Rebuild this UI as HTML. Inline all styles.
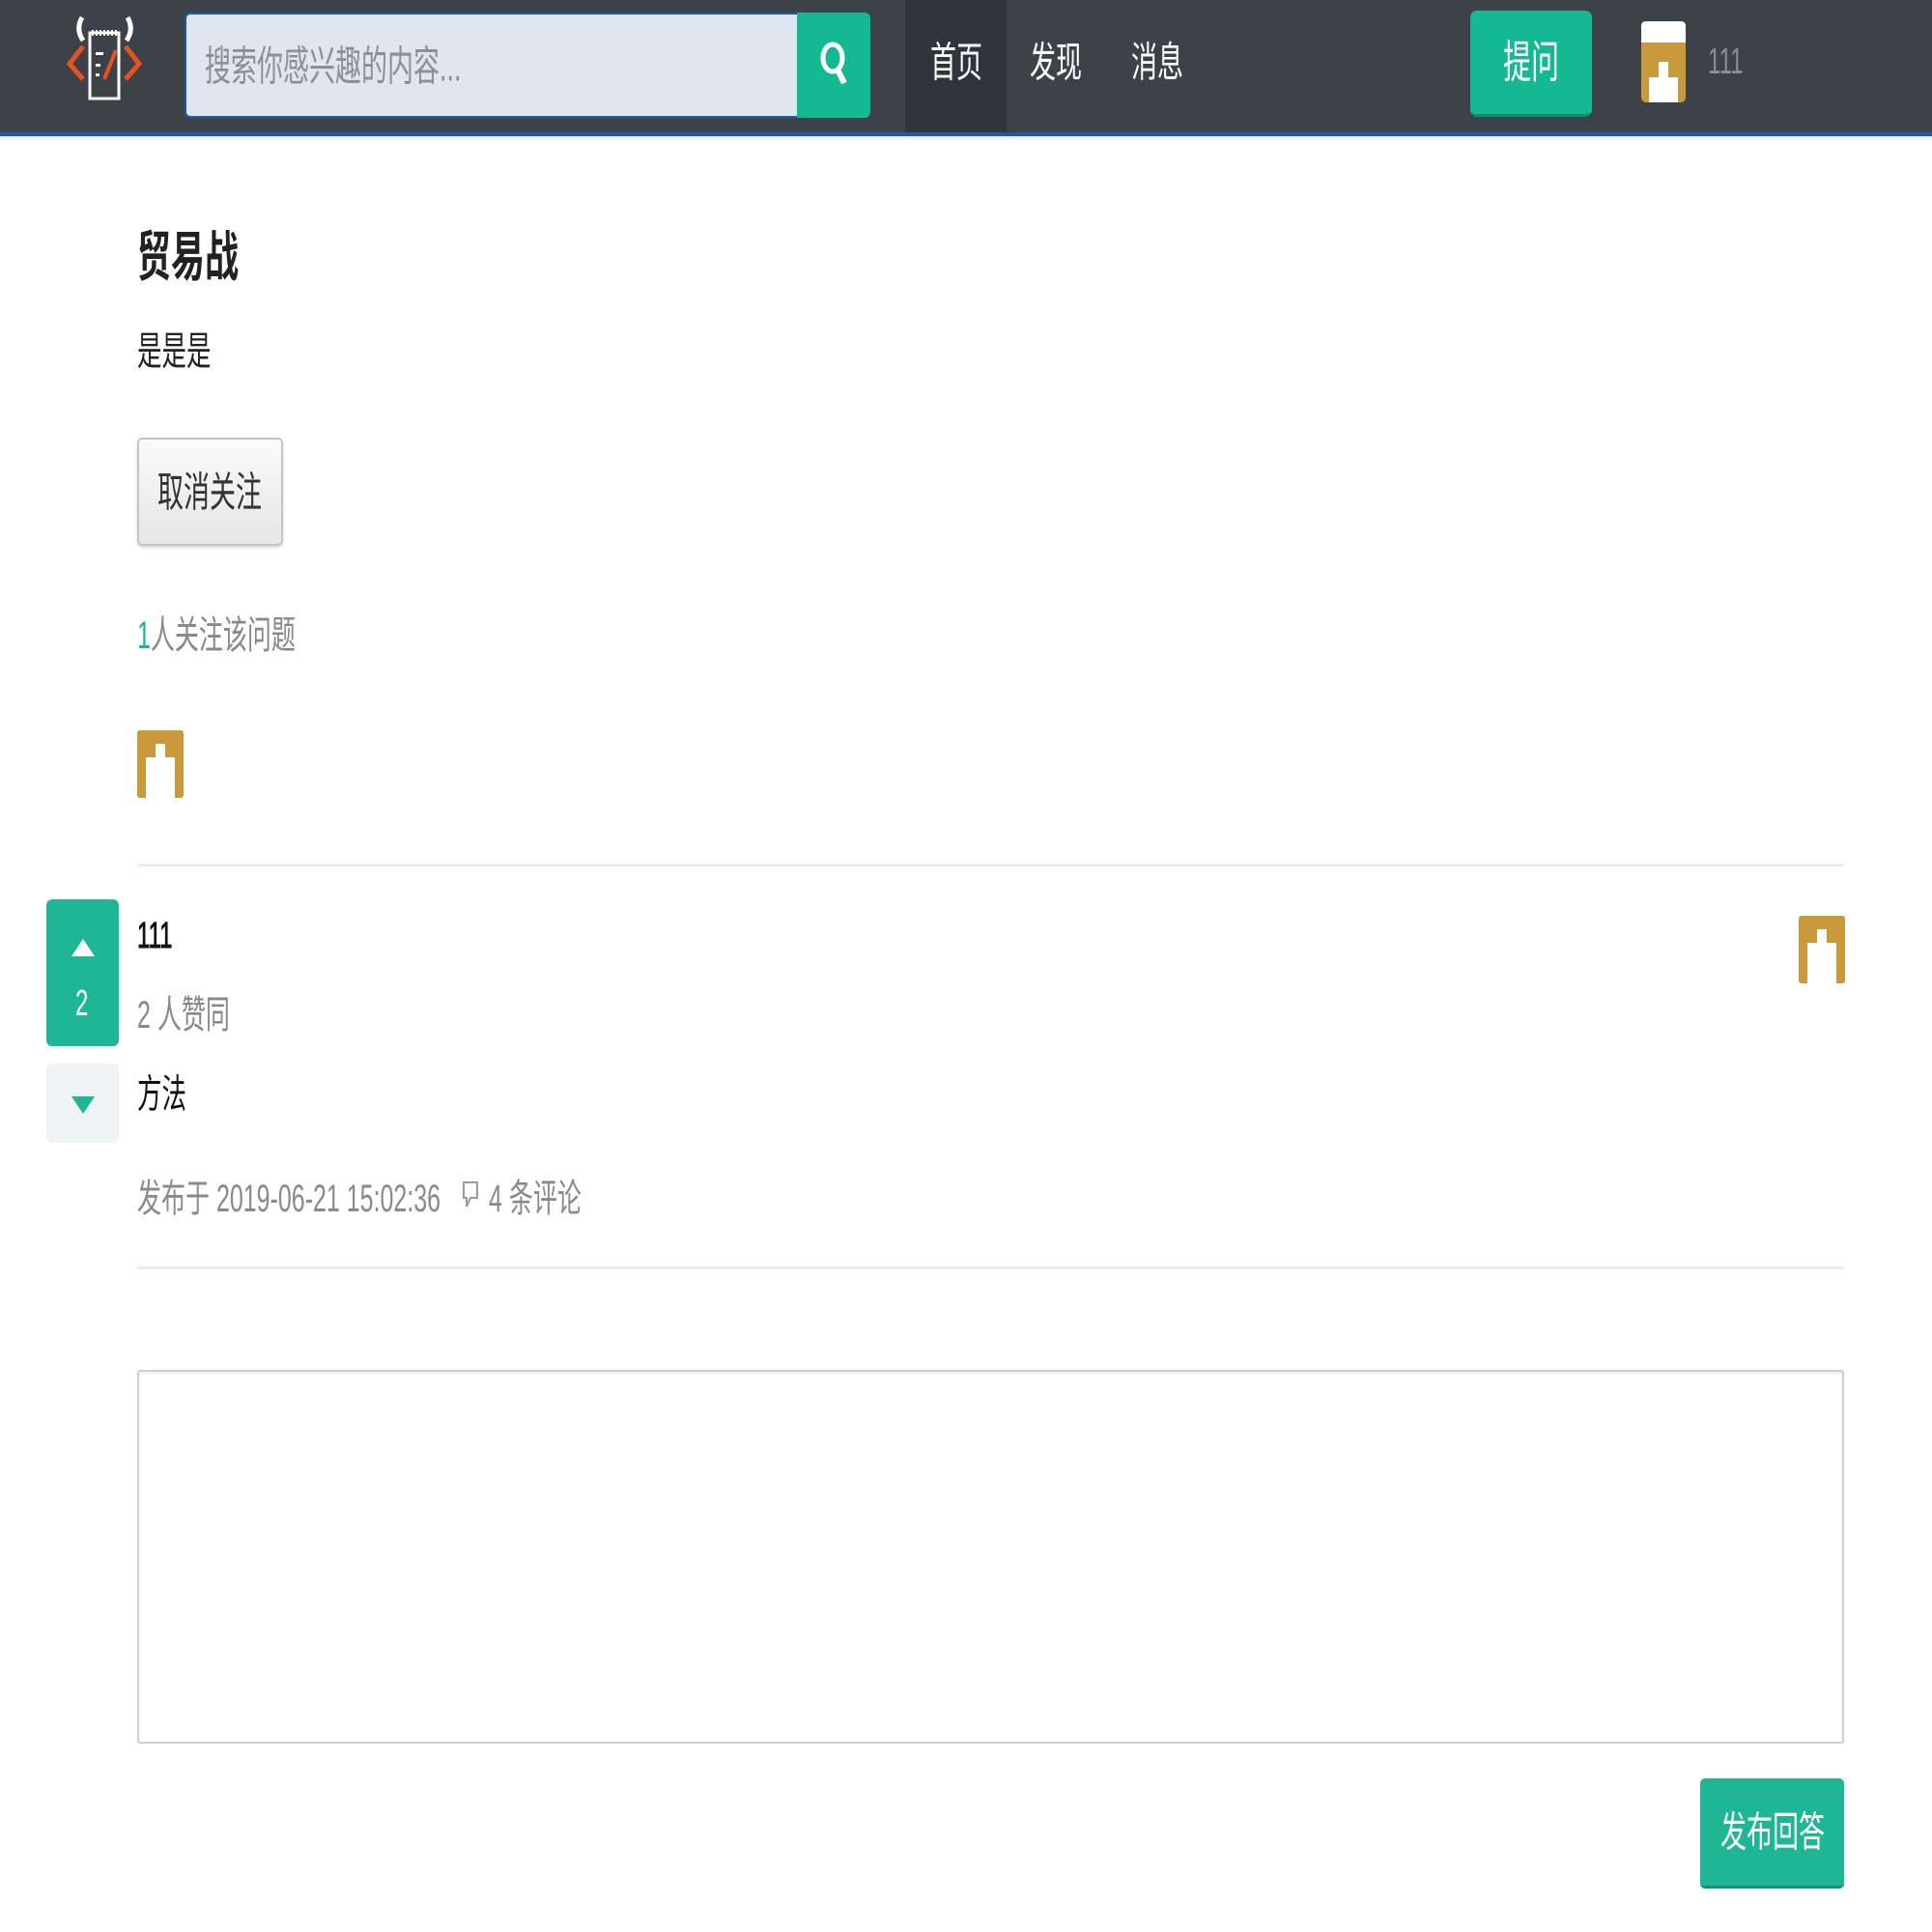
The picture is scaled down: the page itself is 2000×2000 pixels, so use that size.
<!DOCTYPE html>
<html><head><meta charset="utf-8"><style>
*{margin:0;padding:0;box-sizing:border-box}
body{width:2000px;height:2000px;background:#fff;position:relative;overflow:hidden;font-family:"Liberation Sans","Noto Sans CJK SC",sans-serif}
.a{position:absolute}
.t{position:absolute;line-height:1;white-space:nowrap;transform:translateY(-50%) scaleY(1.6);transform-origin:left center}
</style></head><body>
<div class="a" style="left:0;top:0;width:2000px;height:137px;background:#3d4249"></div>
<div class="a" style="left:0;top:137px;width:2000px;height:4px;background:#1e5a9e"></div>
<div class="a" style="left:0;top:141px;width:2000px;height:6px;background:linear-gradient(#e8e8e8,#fff)"></div>
<div class="a" style="left:937px;top:0;width:105px;height:137px;background:#2f333a"></div>
<svg class="a" style="left:50px;top:10px" width="110" height="110" viewBox="0 0 110 110">
<path d="M35 8 Q28 20 36 32" stroke="#fff" stroke-width="5" fill="none"/>
<path d="M82 8 Q89 20 81 32" stroke="#fff" stroke-width="5" fill="none"/>
<rect x="43" y="24" width="30" height="68" fill="none" stroke="#fff" stroke-width="3"/>
<path d="M45 24 h26" stroke="#fff" stroke-width="6" stroke-dasharray="2 2"/>
<rect x="49" y="44" width="8" height="3" fill="#fff"/><rect x="49" y="56" width="5" height="3" fill="#fff"/><rect x="49" y="66" width="4" height="3" fill="#fff"/>
<path d="M70 42 L58 72" stroke="#e8521c" stroke-width="4"/>
<path d="M36 38 L22 56 L36 72" stroke="#e8521c" stroke-width="5" fill="none"/>
<path d="M80 38 L94 56 L80 72" stroke="#e8521c" stroke-width="5" fill="none"/>
</svg>
<div class="a" style="left:191px;top:13px;width:636px;height:109px;background:#dfe6ef;border:2px solid #1b5aa0;border-radius:6px 0 0 6px"></div>
<div class="t" style="left:212px;top:70px;font-size:27px;color:#8b9097">搜索你感兴趣的内容...</div>
<div class="a" style="left:825px;top:13px;width:76px;height:109px;background:#14b994;border-radius:0 6px 6px 0"></div>
<svg class="a" style="left:846px;top:40px" width="34" height="54" viewBox="0 0 34 54"><ellipse cx="16" cy="20" rx="10" ry="14" fill="none" stroke="#fff" stroke-width="5"/><path d="M21 32 L28 46" stroke="#fff" stroke-width="6"/></svg>
<div class="t" style="left:963px;top:66px;font-size:27px;color:#fff">首页</div>
<div class="t" style="left:1066px;top:66px;font-size:27px;color:#fff">发现</div>
<div class="t" style="left:1171px;top:66px;font-size:27px;color:#fff">消息</div>
<div class="a" style="left:1522px;top:11px;width:126px;height:110px;background:#14b994;border-radius:7px;border-bottom:3px solid #0e8e72"></div>
<div class="t" style="left:1556px;top:67px;font-size:29px;color:#fff">提问</div>
<svg class="a" style="left:1699px;top:22px" width="46" height="84" viewBox="0 0 46 84"><rect width="46" height="84" rx="5" fill="#c99a3b"/><path d="M0 5 Q0 0 5 0 H41 Q46 0 46 5 V22 H0 Z" fill="#fff"/><path d="M8 84 V58 H18 V42 H28 V58 H38 V84 Z" fill="#fff"/></svg>
<div class="t" style="left:1768px;top:65px;font-size:24px;color:#8a8e94">111</div>

<div class="t" style="left:142px;top:267px;font-size:35px;font-weight:bold;color:#222">贸易战</div>
<div class="t" style="left:142px;top:366px;font-size:25.5px;color:#222">是是是</div>
<div class="a" style="left:142px;top:453px;width:151px;height:112px;background:linear-gradient(#fafafa,#e6e6e6);border:2px solid #c4c4c4;border-radius:5px;box-shadow:0 2px 3px rgba(0,0,0,.15)"></div>
<div class="t" style="left:163px;top:511px;font-size:27px;color:#333">取消关注</div>
<div class="t" style="left:142px;top:659px;font-size:25px;color:#888"><span style="color:#14b994">1</span>人关注该问题</div>
<svg class="a" style="left:142px;top:756px" width="48" height="70" viewBox="0 0 48 70"><rect width="48" height="70" rx="3" fill="#c99a3b"/><path d="M9 70 V28 H19 V14 H29 V28 H39 V70 Z" fill="#fff"/></svg>
<div class="a" style="left:142px;top:894px;width:1767px;height:3px;background:#ececec"></div>

<div class="a" style="left:48px;top:931px;width:75px;height:152px;background:#1fb695;border-radius:6px"></div>
<svg class="a" style="left:73px;top:970px" width="26" height="22"><path d="M13 2 L25 20 H1 Z" fill="#fff"/></svg>
<div class="t" style="left:78px;top:1040px;font-size:24px;color:#fff">2</div>
<div class="a" style="left:48px;top:1101px;width:75px;height:82px;background:#eef3f6;border-radius:6px"></div>
<svg class="a" style="left:73px;top:1133px" width="26" height="22"><path d="M13 20 L25 2 H1 Z" fill="#1fb695"/></svg>
<div class="t" style="left:142px;top:970px;font-size:24px;color:#111;-webkit-text-stroke:0.6px #111">111</div>
<div class="t" style="left:142px;top:1052px;font-size:25px;color:#888">2 人赞同</div>
<div class="t" style="left:142px;top:1135px;font-size:25.5px;color:#111">方法</div>
<div class="t" style="left:142px;top:1242px;font-size:25px;color:#8a8a8a">发布于 2019-06-21 15:02:36</div>
<svg class="a" style="left:478px;top:1222px" width="18" height="30" viewBox="0 0 18 30"><path d="M2 2 H16 V18 H9 L5 27 V18 H2 Z" fill="none" stroke="#999" stroke-width="2"/></svg>
<div class="t" style="left:506px;top:1242px;font-size:25px;color:#8a8a8a">4 条评论</div>
<svg class="a" style="left:1862px;top:948px" width="48" height="70" viewBox="0 0 48 70"><rect width="48" height="70" rx="3" fill="#c99a3b"/><path d="M9 70 V28 H19 V14 H29 V28 H39 V70 Z" fill="#fff"/></svg>
<div class="a" style="left:142px;top:1311px;width:1767px;height:3px;background:#ececec"></div>

<div class="a" style="left:142px;top:1418px;width:1767px;height:387px;border:2px solid #cfcfcf;border-radius:3px;box-shadow:inset 0 2px 3px rgba(0,0,0,.08)"></div>
<div class="a" style="left:1760px;top:1841px;width:149px;height:114px;background:#1fb695;border-radius:5px;border-bottom:3px solid #139273"></div>
<div class="t" style="left:1781px;top:1898px;font-size:27px;color:#fff">发布回答</div>
</body></html>
